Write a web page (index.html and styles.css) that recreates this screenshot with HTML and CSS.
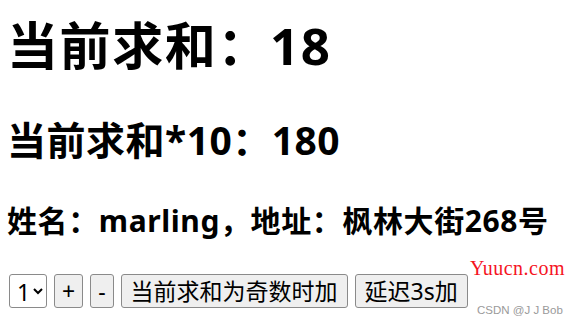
FILE: index.html
```html
<!DOCTYPE html>
<html lang="zh-CN">
<head>
<meta charset="utf-8">
<title>求和</title>
<link rel="stylesheet" href="styles.css">
</head>
<body>
<div class="app">
  <h1 class="sum">当前求和：18</h1>
  <h2 class="sum10">当前求和*10：180</h2>
  <h3 class="person">姓名：marling，地址：枫林大街268号</h3>
  <div class="controls">
    <select class="picker">
      <option>1</option>
      <option>2</option>
      <option>3</option>
    </select>
    <button class="btn btn-sign">+</button>
    <button class="btn btn-sign">-</button>
    <button class="btn">当前求和为奇数时加</button>
    <button class="btn">延迟3s加</button>
  </div>
</div>
<div class="mark-site">Yuucn.com</div>
<div class="mark-csdn">CSDN @J J Bob</div>
</body>
</html>
```

FILE: styles.css
```css
html, body {
  margin: 0;
  padding: 0;
  background: #fff;
}
body {
  font-family: "Noto Sans", "Noto Sans CJK SC", sans-serif;
  color: #000;
  width: 579px;
  height: 325px;
  overflow: hidden;
  position: relative;
}
.app {
  padding: 13px 0 0 7px;
}
.sum {
  font-size: 51px;
  font-weight: 700;
  line-height: 64px;
  letter-spacing: 1.6px;
  margin: 0 0 38px;
}
.sum10 {
  font-size: 39px;
  font-weight: 700;
  line-height: 50px;
  letter-spacing: 0.5px;
  margin: 0 0 36px;
}
.person {
  font-size: 30px;
  font-weight: 700;
  line-height: 40px;
  letter-spacing: 0.6px;
  margin: 0 0 33px;
}
.controls {
  display: flex;
  align-items: center;
  gap: 7px;
  padding-left: 2px;
}
.btn, .picker {
  font-family: "Noto Sans", "Noto Sans CJK SC", sans-serif;
  font-size: 23px;
  line-height: 28px;
  color: #000;
  background: #efefef;
  border: 1.5px solid #8a8a8a;
  border-radius: 3px;
  padding: 2px 9px;
  margin: 0;
}
.btn-sign {
  padding: 2px 7px;
}
.picker {
  background: #fff;
  padding: 0 0 0 3px;
  width: 38px;
  height: 34px;
}
.mark-site {
  position: absolute;
  left: 470px;
  top: 257px;
  font-family: "Liberation Serif", serif;
  font-size: 20px;
  color: #f5141e;
  letter-spacing: 0.5px;
}
.mark-csdn {
  position: absolute;
  left: 477px;
  top: 304px;
  font-family: "Liberation Sans", sans-serif;
  font-size: 11.5px;
  color: #9a9a9a;
}
```
